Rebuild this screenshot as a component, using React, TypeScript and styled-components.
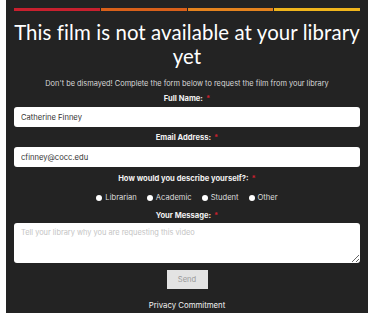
import React from 'react';
import styled, { createGlobalStyle } from 'styled-components';

const GlobalStyle = createGlobalStyle`
  html, body {
    margin: 0;
    padding: 0;
    background: #ffffff;
  }
  body {
    font-family: 'Inter', 'Noto Sans', sans-serif;
  }
`;

const barColors = ['#c8202e', '#d9601a', '#e5831e', '#f0b51c'];

const Panel = styled.div`
  margin-left: 6px;
  width: 362px;
  height: 313px;
  background: #232323;
  box-sizing: border-box;
  padding: 8px 8px 0;
  display: flex;
  flex-direction: column;
  align-items: center;
  color: #ffffff;
`;

const Bars = styled.div`
  display: grid;
  grid-template-columns: repeat(4, 1fr);
  column-gap: 1px;
  width: 346px;
`;

const Bar = styled.div<{ $color: string }>`
  height: 3px;
  background: ${({ $color }) => $color};
`;

const Title = styled.h1`
  margin: 9px -4px 0;
  font-family: 'Lato', 'Inter', sans-serif;
  font-size: 20.4px;
  line-height: 24px;
  font-weight: 400;
  text-align: center;
  letter-spacing: 0.1px;
`;

const Subtitle = styled.p`
  margin: 11px 0 0;
  font-size: 7.4px;
  line-height: 10px;
  color: #d8d8d8;
  text-align: center;
`;

const Label = styled.label<{ $top: number }>`
  display: block;
  margin-top: ${({ $top }) => $top}px;
  font-size: 7.6px;
  line-height: 10px;
  font-weight: 700;
  text-align: center;
  color: #f2f2f2;
`;

const Star = styled.span`
  color: #c8202e;
  margin-left: 3px;
`;

const TextInput = styled.input<{ $top: number }>`
  display: block;
  width: 346px;
  height: 20px;
  margin-top: ${({ $top }) => $top}px;
  box-sizing: border-box;
  border: none;
  border-radius: 3px;
  background: #ffffff;
  padding: 0 7px;
  font-family: 'Inter', 'Noto Sans', sans-serif;
  font-size: 7.6px;
  color: #333333;
`;

const Radios = styled.div`
  display: flex;
  gap: 10px;
  margin-top: 9px;
  font-size: 7.6px;
  line-height: 10px;
  color: #dddddd;
`;

const RadioOption = styled.span`
  display: flex;
  align-items: center;
  gap: 3px;
`;

const Dot = styled.span`
  width: 6px;
  height: 6px;
  border-radius: 50%;
  background: #ffffff;
`;

const MessageBox = styled.textarea`
  display: block;
  width: 346px;
  height: 40px;
  margin-top: 2px;
  box-sizing: border-box;
  border: none;
  border-radius: 3px;
  background: #ffffff;
  padding: 5px 7px;
  resize: vertical;
  font-family: 'Inter', 'Noto Sans', sans-serif;
  font-size: 7.4px;
  &::placeholder {
    color: #c4c4c4;
  }
`;

const SendButton = styled.button`
  margin-top: 7px;
  width: 41px;
  height: 19px;
  border: none;
  background: #e3e3e3;
  color: #9a9a9a;
  font-family: 'Inter', 'Noto Sans', sans-serif;
  font-size: 7.6px;
  padding: 0;
`;

const Privacy = styled.a`
  margin-top: 11px;
  font-size: 7.8px;
  line-height: 10px;
  color: #f2f2f2;
  text-decoration: none;
`;

const roles = ['Librarian', 'Academic', 'Student', 'Other'];

export default function App() {
  return (
    <>
      <GlobalStyle />
      <Panel>
        <Bars>
          {barColors.map((c) => (
            <Bar key={c} $color={c} />
          ))}
        </Bars>
        <Title>This film is not available at your library yet</Title>
        <Subtitle>Don't be dismayed! Complete the form below to request the film from your library</Subtitle>
        <Label $top={5}>
          Full Name:<Star>*</Star>
        </Label>
        <TextInput $top={3} defaultValue="Catherine Finney" />
        <Label $top={6}>
          Email Address:<Star>*</Star>
        </Label>
        <TextInput $top={4} defaultValue="cfinney@cocc.edu" />
        <Label $top={7}>
          How would you describe yourself?:<Star>*</Star>
        </Label>
        <Radios>
          {roles.map((r) => (
            <RadioOption key={r}>
              <Dot />
              {r}
            </RadioOption>
          ))}
        </Radios>
        <Label $top={8}>
          Your Message:<Star>*</Star>
        </Label>
        <MessageBox placeholder="Tell your library why you are requesting this video" />
        <SendButton>Send</SendButton>
        <Privacy href="#">Privacy Commitment</Privacy>
      </Panel>
    </>
  );
}
